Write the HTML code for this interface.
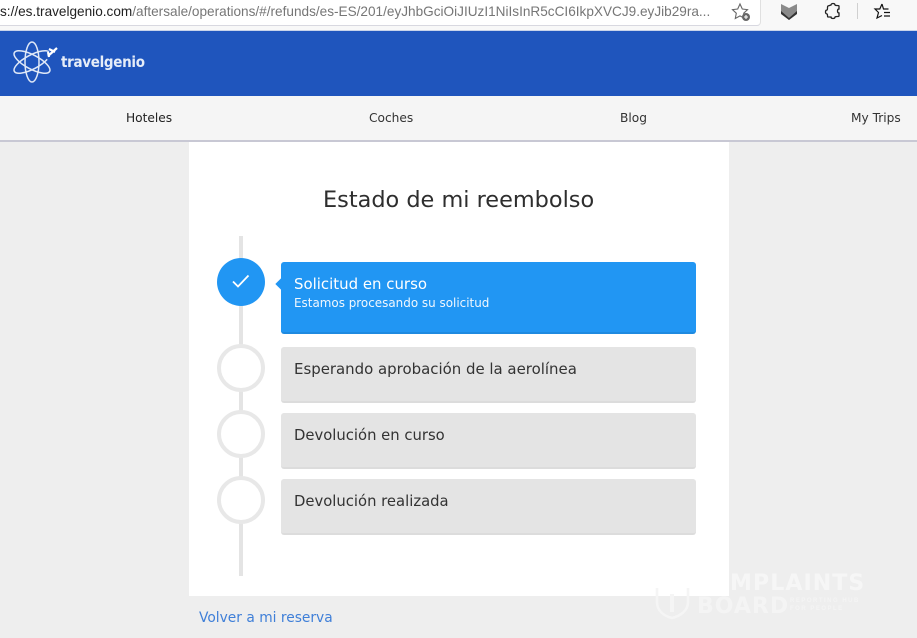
<!DOCTYPE html>
<html><head><meta charset="utf-8"><style>
html,body{margin:0;padding:0}
body{width:917px;height:638px;overflow:hidden;position:relative;background:#eeeeee;font-family:"Liberation Sans",sans-serif;color:#333}
.a{position:absolute}
.t{position:absolute;white-space:nowrap;font-family:"DejaVu Sans",sans-serif}
.box{position:absolute;left:281px;width:415px;background:#e4e4e4;border-radius:3px;border-bottom:2px solid #dcdcdc;box-sizing:border-box}
.c{position:absolute;left:217px;width:48px;height:48px;box-sizing:border-box;border-radius:50%;background:#fff;border:4.500px solid #e8e8e8}
</style></head><body>
<div class="a" style="left:0;top:0;width:917px;height:30px;background:#f8f8f8"></div>
<div class="a" style="left:0;top:0;width:760px;height:25px;background:#fff;border-bottom:1px solid #d8d8e0;border-right:1px solid #e0e0e0;border-bottom-right-radius:4px"></div>
<div class="t" style="left:0;top:3px;font:13.600px/18px 'Liberation Sans',sans-serif;color:#767676;width:712px;overflow:hidden"><span style="color:#222">s://es.travelgenio.com</span>/aftersale/operations/#/refunds/es-ES/201/eyJhbGciOiJIUzI1NiIsInR5cCI6IkpXVCJ9.eyJib29ra...</div>
<svg class="a" style="left:730px;top:2px" width="22" height="20" viewBox="0 0 22 20" fill="none" stroke="#666" stroke-width="1.100"><path d="M10 2l2.300 5 5.200.6-3.800 3.600 1 5.300-4.700-2.600-4.700 2.600 1-5.300L2.500 7.600 7.700 7z"/><circle cx="16" cy="15" r="4" fill="#666" stroke="none"/><path d="M14 15h4M16 13v4" stroke="#fff"/></svg>
<svg class="a" style="left:780px;top:3px" width="18" height="18" viewBox="0 0 18 18"><path d="M1 1l8 4 8-4v9l-8 7-8-7z" fill="#8a8a8a"/><path d="M1 8l8 7 8-7v3l-8 6-8-6z" fill="#333"/></svg>
<svg class="a" style="left:824px;top:2px" width="18" height="18" viewBox="0 0 18 18" fill="none" stroke="#222" stroke-width="1.300"><path d="M7 3c0-2 4-2 4 0 0 1 4 0 4 1v3c-2 0-2 4 0 4v3c0 1-3 0-4 1 0 2-4 2-4 0H4c-1 0 0-3-1-3-2 0-2-4 0-4 1 0 0-4 1-4z"/></svg>
<div class="a" style="left:857px;top:3px;width:1px;height:16px;background:#d0d0d0"></div>
<svg class="a" style="left:873px;top:2px" width="20" height="18" viewBox="0 0 20 18" fill="none" stroke="#111" stroke-width="1.200"><path d="M9 2L6.800 7H2l3.500 3.500L4 16l5-2.500M9 2l1.500 5h5M11 10.500h6M11 14h6"/></svg>

<div class="a" style="left:0;top:30px;width:917px;height:66px;background:#1f55bd;border-top:1px solid #c9d4ea;box-sizing:border-box"></div>
<svg class="a" style="left:13px;top:41px" width="46" height="44" viewBox="0 0 46 44" fill="none" stroke="#dfe8f7" stroke-width="1.500"><ellipse cx="19" cy="21" rx="7" ry="20"/><ellipse cx="19" cy="21" rx="7" ry="20" transform="rotate(62 19 21)"/><ellipse cx="19" cy="21" rx="7" ry="20" transform="rotate(-62 19 21)"/><path d="M33 17L44 7M37 8l5 4" stroke="#1f55bd" stroke-width="5"/><path d="M35 15L44 7M36 8l6 3M35 11l1 5" stroke="#fff" stroke-width="2.200"/></svg>
<div class="t" style="left:61px;top:52px;font:bold 15.500px/20px 'DejaVu Sans',sans-serif;color:#e6edf8;letter-spacing:-.35px;transform:scaleX(.87);transform-origin:0 0">travelgenio</div>

<div class="a" style="left:0;top:96px;width:917px;height:46px;background:#f5f5f5;border-bottom:2px solid #c8c8d4;box-sizing:border-box"></div>
<div class="t" style="left:126px;top:110px;font-size:12.200px;line-height:17px;color:#222">Hoteles</div>
<div class="t" style="left:369px;top:110px;font-size:12.200px;line-height:17px;color:#333">Coches</div>
<div class="t" style="left:620px;top:110px;font-size:12.200px;line-height:17px;color:#333">Blog</div>
<div class="t" style="left:851px;top:110px;font-size:12.200px;line-height:17px;color:#333">My Trips</div>

<div class="a" style="left:189px;top:142px;width:540px;height:454px;background:#fff"></div>
<div class="t" style="left:323px;top:184px;font-size:22.400px;line-height:32px;color:#2e2e2e">Estado de mi reembolso</div>

<div class="a" style="left:239px;top:236px;width:4px;height:340px;background:#e4e4e4"></div>
<div class="a" style="left:217px;top:258px;width:48px;height:48px;border-radius:50%;background:#2196f3"></div>
<svg class="a" style="left:231px;top:273px" width="20" height="16" viewBox="0 0 20 16" fill="none" stroke="#fff" stroke-width="1.800"><path d="M2 8.500l5 5L17.500 2.500"/></svg>
<div class="a" style="left:277px;top:280px;width:8px;height:8px;background:#2196f3;transform:rotate(45deg)"></div>
<div class="box" style="top:262px;height:72px;background:#2196f3;border-bottom-color:#1e8ae0"></div>
<div class="t" style="left:294px;top:274px;font-size:14.950px;line-height:20px;color:#fff">Solicitud en curso</div>
<div class="t" style="left:294px;top:295px;font-size:11.950px;line-height:17px;color:#f0f7fe">Estamos procesando su solicitud</div>

<div class="c" style="top:344px"></div>
<div class="box" style="top:347px;height:56px"></div>
<div class="t" style="left:294px;top:359px;font-size:14.950px;line-height:20px">Esperando aprobación de la aerolínea</div>
<div class="c" style="top:410px"></div>
<div class="box" style="top:413px;height:56px"></div>
<div class="t" style="left:294px;top:426px;font-size:14.800px;line-height:20px">Devolución en curso</div>
<div class="c" style="top:476px"></div>
<div class="box" style="top:479px;height:56px"></div>
<div class="t" style="left:294px;top:492px;font-size:14.800px;line-height:20px">Devolución realizada</div>

<div class="t" style="left:199px;top:608px;font-size:13.800px;line-height:20px;color:#3f7fd8">Volver a mi reserva</div>

<div class="t" style="left:730px;top:570px;font:bold 22px/28px 'DejaVu Sans',sans-serif;color:#f6f6f6;letter-spacing:1.100px">MPLAINTS</div>
<div class="t" style="left:697px;top:593px;font:bold 22px/28px 'DejaVu Sans',sans-serif;color:#f4f4f4;letter-spacing:1px">BOARD</div>
<div class="t" style="left:790px;top:597px;font:bold 6px/8px 'Liberation Sans',sans-serif;color:#f4f4f4;letter-spacing:1.500px">REPORTING HUB<br>FOR PEOPLE</div>
<svg class="a" style="left:655px;top:586px" width="36" height="34" viewBox="0 0 36 34" fill="none" stroke="#f5f5f5" stroke-width="2.500"><path d="M2 2v14c0 9 7 14 15 16 8-2 16-7 16-16V2"/><path d="M17 8v18" stroke-width="4"/></svg>
</body></html>
